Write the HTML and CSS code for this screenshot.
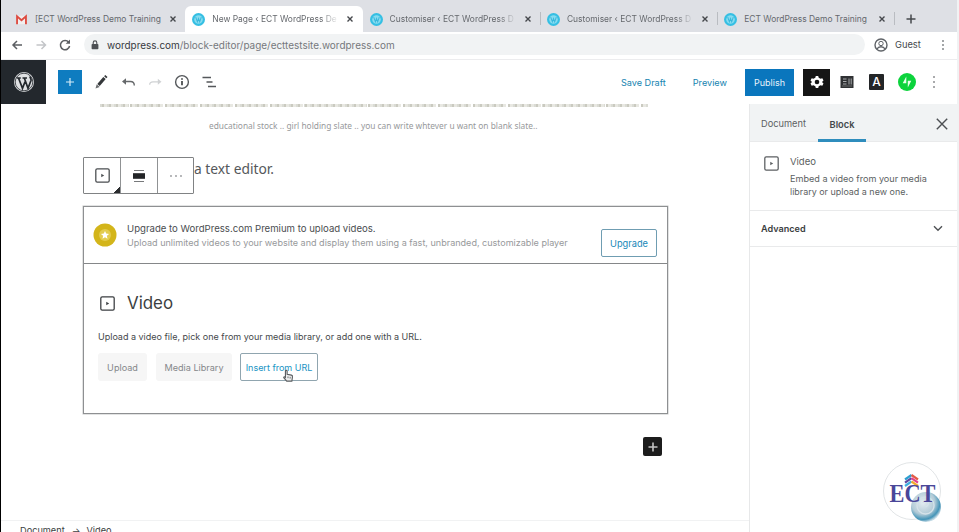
FILE: index.html
```html
<!DOCTYPE html>
<html lang="en">
<head>
<meta charset="utf-8">
<title>New Page</title>
<link rel="stylesheet" href="styles.css">
</head>
<body>
<svg class="defs" width="0" height="0">
  <defs>
    <symbol id="wp" viewBox="0 0 14 14"><circle cx="7" cy="7" r="7" fill="#35bfe3"/><circle cx="7" cy="7" r="4.6" fill="#86dcf0"/><path d="M4 4.500l1.800 5L7 6l1.300 3.500L10 4.500" fill="none" stroke="#3ab8dc" stroke-width="1.100"/></symbol>
    <symbol id="x" viewBox="0 0 8 8"><path d="M1.500 1.500l5 5M6.500 1.500l-5 5" stroke="#45484c" stroke-width="1.400"/></symbol>
    <symbol id="video" viewBox="0 0 16 16"><rect x="1.700" y="1.700" width="12.600" height="12.600" rx="1.300" fill="none" stroke="currentColor" stroke-width="1.200"/><path d="M6.800 6.300L9.600 8 6.800 9.700z" fill="currentColor"/></symbol>
  </defs>
</svg>
<div class="window">
  <div class="tabs">
    <div class="tab"><svg class="fav" viewBox="0 0 14 14"><rect x="1.500" y="3" width="11" height="9" fill="#f2eeee"/><path d="M2.200 12V3.600L7 7.800l4.800-4.200V12" fill="none" stroke="#dd4b40" stroke-width="2"/></svg><span class="label">[ECT WordPress Demo Training</span><svg class="close"><use href="#x"/></svg></div>
    <div class="tab active"><svg class="fav"><use href="#wp"/></svg><span class="label fade">New Page ‹ ECT WordPress De</span><svg class="close"><use href="#x"/></svg></div>
    <div class="tab"><svg class="fav"><use href="#wp"/></svg><span class="label fade">Customiser ‹ ECT WordPress D</span><svg class="close"><use href="#x"/></svg></div>
    <div class="tab line"><svg class="fav"><use href="#wp"/></svg><span class="label fade">Customiser ‹ ECT WordPress D</span><svg class="close"><use href="#x"/></svg></div>
    <div class="tab line"><svg class="fav"><use href="#wp"/></svg><span class="label">ECT WordPress Demo Training</span><svg class="close"><use href="#x"/></svg></div>
    <div class="newtab"><svg width="10" height="10" viewBox="0 0 10 10"><path d="M5 .5v9M.5 5h9" stroke="#45484c" stroke-width="1.500"/></svg></div>
  </div>
  <div class="address">
    <svg class="nav" width="70" height="14" viewBox="0 0 70 14" fill="none" stroke-width="1.500"><path d="M11 7H2M6 3L2 7l4 4" stroke="#5c5f63"/><path d="M25.500 7h9M30.500 3l4 4-4 4" stroke="#c3c5c8"/><path d="M57.700 4.300A4.600 4.600 0 1 0 58.600 8" stroke="#5c5f63"/><path d="M59 1.500v4.300h-4.300z" fill="#5c5f63"/></svg>
    <div class="field"><svg width="8" height="10" viewBox="0 0 8 10"><rect x=".6" y="4" width="6.800" height="5.300" rx=".8" fill="#4d5054"/><path d="M2.200 4V2.700a1.800 1.800 0 0 1 3.600 0V4" fill="none" stroke="#4d5054" stroke-width="1.100"/></svg><span class="url"><b>wordpress.com</b>/block-editor/page/ecttestsite.wordpress.com</span></div>
    <div class="guest"><svg width="14" height="14" viewBox="0 0 14 14"><circle cx="7" cy="7" r="6" fill="none" stroke="#5f6368" stroke-width="1.400"/><circle cx="7" cy="5.500" r="2.200" fill="none" stroke="#5f6368"/><path d="M3 11c1.500-3 6.500-3 8 0" fill="none" stroke="#5f6368" stroke-width="1.300"/></svg><span>Guest</span></div>
    <svg class="kebab" width="4" height="12" viewBox="0 0 4 12" fill="#85888b"><circle cx="2" cy="2" r="1"/><circle cx="2" cy="6" r="1"/><circle cx="2" cy="10" r="1"/></svg>
  </div>
  <div class="toolbar">
    <div class="wplogo"><svg width="22" height="22" viewBox="0 0 22 22"><circle cx="11" cy="11" r="10" fill="#dfe1e3"/><circle cx="11" cy="11" r="8.800" fill="none" stroke="#23282d" stroke-width=".8"/><path d="M3.600 7h4.200M5.500 7l4 10.300L12 10.800M9.500 7H14M11.300 7l3.700 10.300L18 9.500c.5-1.700-.8-2.700-1.200-4" fill="none" stroke="#23282d" stroke-width="1.700"/></svg></div>
    <button class="add"><svg width="12" height="12" viewBox="0 0 12 12"><path d="M6 2v8M2 6h8" stroke="#d8edf8" stroke-width="1.200"/></svg></button>
    <svg class="tools" width="124" height="18" viewBox="0 0 124 18" fill="none" stroke="#34373a">
      <path d="M5.500 12L11.500 5" stroke-width="3.200"/><path d="M12.200 4.300l1.200-1.300" stroke-width="3"/><path d="M2.500 15.500l1.200-4.200 3 2.600z" fill="#6b6e70" stroke="none"/>
      <path d="M30.500 8.500h7q3.800 0 3.800 4" stroke="#66696b" stroke-width="1.400"/><path d="M29 8.500l4-3.300v6.600z" fill="#66696b" stroke="none"/>
      <path d="M66 8.800h-6q-3.300 0-3.300 3" stroke="#d0d2d4" stroke-width="1.300"/><path d="M68.500 8.800l-3.700-3v6z" fill="#d0d2d4" stroke="none"/>
      <circle cx="89" cy="9" r="6.400" stroke="#55585b" stroke-width="1.400"/><path d="M89 8v4.300M89 5.300v1.500" stroke-width="1.600"/>
      <path d="M109.500 4.500h8.500M113.500 9h6M115 13.500h8" stroke="#55585b" stroke-width="1.500"/>
    </svg>
    <div class="actions">
      <a class="draft">Save Draft</a><a class="preview">Preview</a><button class="publish">Publish</button>
      <button class="gear"><svg width="16" height="16" viewBox="0 0 16 16"><path d="M6.800 2h2.400l.5 1.800 1.800 1 1.800-.5 1.200 2.100-1.300 1.300v.6l1.300 1.300-1.200 2.100-1.800-.5-1.800 1L9.200 14H6.800l-.5-1.800-1.800-1-1.800.5-1.200-2.100 1.300-1.300v-.6L1.500 6.400l1.200-2.100 1.800.5 1.800-1z" fill="#fff"/><circle cx="8" cy="8" r="2.300" fill="#151515"/></svg></button>
      <svg class="book" width="14" height="14" viewBox="0 0 14 14"><rect x=".5" y="1" width="13" height="12" fill="#303234"/><path d="M3 4h3.500M3 6.500h3.500M3 9h3.500M9 3.500v6M11.200 3.500v6" stroke="#a9abad" stroke-width="1"/><path d="M2 11h10" stroke="#777" stroke-width=".8"/></svg>
      <span class="styles">A</span>
      <svg class="bolt" width="18" height="18" viewBox="0 0 18 18"><circle cx="9" cy="9" r="9" fill="#0cd33c"/><path d="M8.300 3.500v6.800H4.700zM9.800 14.500V7.700h3.500z" fill="#e8ffec"/></svg>
      <svg class="kebab2" width="4" height="14" viewBox="0 0 4 14" fill="#8c8e90"><circle cx="2" cy="2" r="1"/><circle cx="2" cy="7" r="1"/><circle cx="2" cy="12" r="1"/></svg>
    </div>
  </div>
  <div class="main">
    <main class="canvas">
      <div class="cutoff"></div>
      <p class="caption">educational stock .. girl holding slate .. you can write whtever u want on blank slate..</p>
      <div class="para">
        <p>a text editor.</p>
        <div class="blockbar">
          <span class="first"><svg width="17" height="17"><use href="#video"/></svg></span>
          <span><svg width="12" height="14" viewBox="0 0 12 14"><path d="M1 1.500h10M1 12.500h10" stroke="#77797b" stroke-width="1.200"/><rect x="0" y="4.200" width="12" height="5.600" fill="#232527"/></svg></span>
          <span><svg width="14" height="4" viewBox="0 0 14 4" fill="#95979a"><circle cx="2" cy="2" r=".9"/><circle cx="7" cy="2" r=".9"/><circle cx="12" cy="2" r=".9"/></svg></span>
        </div>
      </div>
      <section class="block">
        <div class="nudge">
          <svg class="star" width="24" height="24" viewBox="0 0 24 24"><circle cx="12" cy="12" r="11.500" fill="#d3b51a"/><circle cx="12" cy="12" r="6" fill="#e3cc4e"/><path d="M12 8l1.200 2.600 2.900.3-2.200 1.900.6 2.900-2.500-1.500-2.500 1.500.6-2.900-2.200-1.900 2.900-.3z" fill="#fff"/></svg>
          <div class="copy"><p>Upgrade to WordPress.com Premium to upload videos.</p><p class="sub">Upload unlimited videos to your website and display them using a fast, unbranded, customizable player</p></div>
          <button class="upgrade">Upgrade</button>
        </div>
        <div class="placeholder">
          <h2><svg width="17" height="17"><use href="#video"/></svg>Video</h2>
          <p>Upload a video file, pick one from your media library, or add one with a URL.</p>
          <div class="buttons"><button class="b1">Upload</button><button class="b2">Media Library</button><button class="b3">Insert from URL
            <svg class="cursor" width="12" height="14" viewBox="0 0 14 16"><path d="M4 8.500V2.500a1 1 0 0 1 2 0V6l5 1q1.500.4 1.200 2.200L11.500 14h-6L2 9.800q.5-1.500 2-.3z" fill="#eee" stroke="#5a5d60" stroke-width="1.300"/><path d="M7 8.500v2M9.500 9v2" stroke="#5a5d60"/></svg></button></div>
        </div>
      </section>
      <button class="inserter"><svg width="12" height="12" viewBox="0 0 12 12"><path d="M6 1.500v9M1.500 6h9" stroke="#c5c5c5" stroke-width="1.600"/></svg></button>
      <footer class="crumbs"><span>Document</span><span class="arrow">→</span><span>Video</span></footer>
    </main>
    <aside class="sidebar">
      <div class="sidetabs"><span class="doc">Document</span><span class="blk">Block</span><svg width="12" height="12" viewBox="0 0 12 12"><path d="M.8.800l10.400 10.400M11.200.800L.8 11.200" stroke="#4c4f52" stroke-width="1.400"/></svg></div>
      <div class="card"><svg width="17" height="17"><use href="#video"/></svg><div><h3>Video</h3><p>Embed a video from your media</p><p class="two">library or upload a new one.</p></div></div>
      <div class="advanced"><b>Advanced</b><svg width="10" height="7" viewBox="0 0 10 7"><path d="M1 1.200l4 4 4-4" fill="none" stroke="#4f5255" stroke-width="1.400"/></svg></div>
    </aside>
  </div>
</div>
<div class="watermark">
  <svg width="60" height="62" viewBox="0 0 60 62">
    <defs><radialGradient id="orb" cx=".4" cy=".35" r=".65"><stop offset="0" stop-color="#e5edf1"/><stop offset=".6" stop-color="#b3cbd7"/><stop offset=".87" stop-color="#4595b8"/><stop offset="1" stop-color="#2b7da5" stop-opacity=".3"/></radialGradient></defs>
    <circle cx="29" cy="29" r="28.500" fill="#fff" stroke="#d9dddf" stroke-width=".8"/>
    <circle cx="43" cy="45" r="15" fill="url(#orb)"/>
    <circle cx="42.500" cy="43.500" r="8.500" fill="none" stroke="#d5e2e9" stroke-width="1.300"/>
    <path d="M39.500 41q3-4 6 0 0 2.500-3 4" fill="none" stroke="#d5e2e9" stroke-width="1.300"/>
    <g fill="none" stroke-width="2.200"><path d="M22 17.500l6.500-4.500" stroke="#2e9fd0"/><path d="M28.500 13l6.500 4.500" stroke="#e45b45"/><path d="M22 20.700l6.500-4.500" stroke="#5e489f"/><path d="M28.500 16.200l6.500 4.500" stroke="#e0408f"/><path d="M22 24l6.500-4.500" stroke="#3eaee0"/><path d="M28.500 19.500l6.500 4.500" stroke="#f1a92e"/></g>
    <text x="6.500" y="40" textLength="46" lengthAdjust="spacingAndGlyphs">ECT</text>
  </svg>
</div>
</body>
</html>
```
FILE: styles.css
```css
* { box-sizing: border-box; }
body { margin: 0; background: #fff; font-family: Inter, sans-serif; color: #4a4d50; overflow: hidden; }
p, h2, h3 { margin: 0; }
button { border: 0; padding: 0; font-family: inherit; display: flex; align-items: center; justify-content: center; }
svg { flex: none; display: block; }
.defs { position: absolute; }
.window { height: 532px; border-left: 1px solid #000; border-right: 2px solid #f1f2f3; display: flex; flex-direction: column; }

.tabs { height: 32px; flex: none; background: #dee0e5; display: flex; align-items: flex-end; padding-left: 7px; }
.tab { width: 177.300px; height: 26px; display: flex; align-items: center; padding-left: 7px; font-size: 8.450px; color: #65686d; border-radius: 6px 6px 0 0; }
.tab.active { background: #fff; }
.tab.line, .newtab { background: linear-gradient(#b9bcc1, #b9bcc1) 0 6px / 1px 13px no-repeat; }
.tab.line { border-radius: 0; }
.fav { width: 13px; height: 13px; }
.label { width: 127px; margin-left: 7px; white-space: nowrap; line-height: 14px; }
.fade { -webkit-mask-image: linear-gradient(90deg, #000 85%, transparent); mask-image: linear-gradient(90deg, #000 85%, transparent); }
.close { width: 8px; height: 8px; margin-left: 7px; }
.newtab { height: 26px; display: flex; align-items: center; padding-left: 12px; }

.address { height: 28px; flex: none; display: flex; align-items: center; border-bottom: 1px solid #ececee; padding: 0 0 2px 10px; }
.field { margin-left: 3px; width: 781px; height: 21px; border-radius: 11px; background: #f1f3f4; display: flex; align-items: center; padding-left: 7px; }
.url { margin-left: 8px; font-size: 9.950px; color: #75787c; white-space: nowrap; }
.url b { font-weight: 400; color: #36393d; }
.guest { margin-left: 9px; display: flex; align-items: center; gap: 7px; font-size: 9.300px; color: #45484c; }
.kebab { margin-left: 20px; }

.toolbar { height: 44px; flex: none; display: flex; align-items: center; }
.wplogo { width: 45px; height: 44px; background: #23282d; display: flex; align-items: center; justify-content: center; }
.add { margin-left: 12px; width: 24px; height: 24px; background: #0e7cc0; }
.tools { margin-left: 11px; }
.actions { margin-left: auto; display: flex; align-items: center; padding-right: 21px; }
.draft, .preview { font-size: 9.150px; color: #1583b0; }
.preview { margin-left: 27px; }
.publish { margin-left: 18px; width: 49px; height: 27px; background: #0a76bd; color: #e9f4fb; font-size: 9px; }
.gear { margin-left: 9px; width: 27px; height: 27px; background: #151515; }
.book { margin-left: 10px; }
.styles { margin-left: 15px; width: 15px; height: 16px; background: #232527; color: #fff; font-size: 12px; font-weight: 500; line-height: 16px; text-align: center; border-radius: 1px; }
.bolt { margin-left: 14px; }
.kebab2 { margin-left: 16px; }

.main { flex: 1; display: flex; min-height: 0; }
.canvas { width: 748px; display: flex; flex-direction: column; overflow: hidden; }
/* lower edge of the line scrolled under the toolbar */
.cutoff { height: 3px; margin: 0 0 1px 99px; width: 548px; flex: none; opacity: .6; background: repeating-linear-gradient(90deg, transparent 0 2px, #a7a897 2px 4px, #d9d9d0 4px 7px), repeating-linear-gradient(90deg, #c3c4b8 0 29px, transparent 29px 34px); }
.caption { margin: 12px 0 0 208px; font: 8.360px/12px "Noto Sans", sans-serif; color: #97999b; white-space: nowrap; }
.para { position: relative; height: 70px; margin-top: 4px; padding-top: 23px; flex: none; }
.para p { margin-left: 193px; font: 13.800px/20px "Noto Sans", sans-serif; color: #55585b; }
.blockbar { position: absolute; left: 82px; top: 21px; width: 111px; height: 37px; background: #fff; border: 1px solid #808284; border-radius: 1px; display: grid; grid-template-columns: 36px 37px 1fr; }
.blockbar span { display: flex; align-items: center; justify-content: center; }
.blockbar span + span { border-left: 1px solid #909294; }
.blockbar .first { background: linear-gradient(135deg, transparent 50%, #2a2c2e 50%) 100% 100% / 6px 6px no-repeat; }
.block { margin-left: 82px; width: 585px; height: 208px; border: 1px solid #8e9092; box-shadow: 0 0 0 .5px #c5c6c7; display: flex; flex-direction: column; flex: none; }
.nudge { height: 57px; border-bottom: 1px solid #858789; display: flex; align-items: flex-start; padding: 0 10px 0 9px; }
.star { margin-top: 16px; }
.copy { margin: 15px 0 0 10px; font-size: 9.600px; line-height: 14px; white-space: nowrap; }
.copy .sub { font-size: 9.060px; color: #97999b; }
.upgrade { margin: 22px 0 0 auto; width: 56px; height: 28px; border: 1px solid #6f9db2; background: #fff; color: #1687b8; font-size: 9.260px; border-radius: 2px; }
.placeholder { padding: 27px 0 0 14px; }
.placeholder h2 { display: flex; align-items: center; gap: 11px; padding-left: 1px; font: 400 16.900px/24px Inter, sans-serif; color: #3b3e41; }
.placeholder p { margin-top: 15px; font-size: 9px; line-height: 14px; color: #45484b; }
.buttons { display: flex; margin: 9px 0 0 0; }
.buttons button { height: 28px; background: #f6f6f6; color: #85878a; font-size: 9.100px; border-radius: 3px; }
.buttons .b1 { width: 49px; }
.buttons .b2 { width: 76px; margin-left: 9px; }
.buttons .b3 { position: relative; width: 78px; margin-left: 8px; background: #fff; border: 1px solid #90a5af; color: #1a94c4; font-size: 9px; border-radius: 2px; }
.cursor { position: absolute; left: 41px; top: 15px; }
.inserter { width: 19px; height: 19px; margin: 23px 0 0 642px; background: #1c1c1c; border-radius: 2px; flex: none; }
.crumbs { margin-top: 64px; height: 20px; flex: none; border-top: 1px solid #f1f2f3; display: flex; padding: 3px 0 0 19px; font-size: 9.200px; line-height: 14px; color: #3b3e41; }
.crumbs .arrow { margin: 0 6px 0 7px; }

.sidebar { flex: 1; border-left: 1px solid #e7e8e9; color: #5c5f62; }
.sidetabs { height: 38px; background: #f1f3f4; border-bottom: 1px solid #e9eaeb; display: flex; align-items: center; padding: 2px 9px 0 11px; font-size: 9.250px; }
.sidetabs .blk { margin-left: 12px; width: 48px; height: 36px; line-height: 37px; text-align: center; border-bottom: 3px solid #2f8dbd; font-size: 9.300px; font-weight: 600; color: #45484b; }
.sidetabs svg { margin-left: auto; }
.card { height: 69px; border-bottom: 1px solid #e9eaeb; display: flex; padding: 13px 0 0 13px; }
.card div { margin-left: 10px; font-size: 9.100px; line-height: 13px; white-space: nowrap; }
.card h3 { font-size: 9.530px; font-weight: 400; line-height: 13px; margin: 0 0 4px; }
.card .two { font-size: 8.950px; }
.advanced { height: 36px; border-bottom: 1px solid #e9eaeb; display: flex; align-items: center; justify-content: space-between; padding: 0 14px 0 11px; font-size: 9.100px; color: #3b3e41; }
.advanced b { font-weight: 600; }
.watermark { position: absolute; left: 883px; top: 462px; }
.watermark text { font: 700 25px "Liberation Serif", serif; fill: #4a4799; }
```
